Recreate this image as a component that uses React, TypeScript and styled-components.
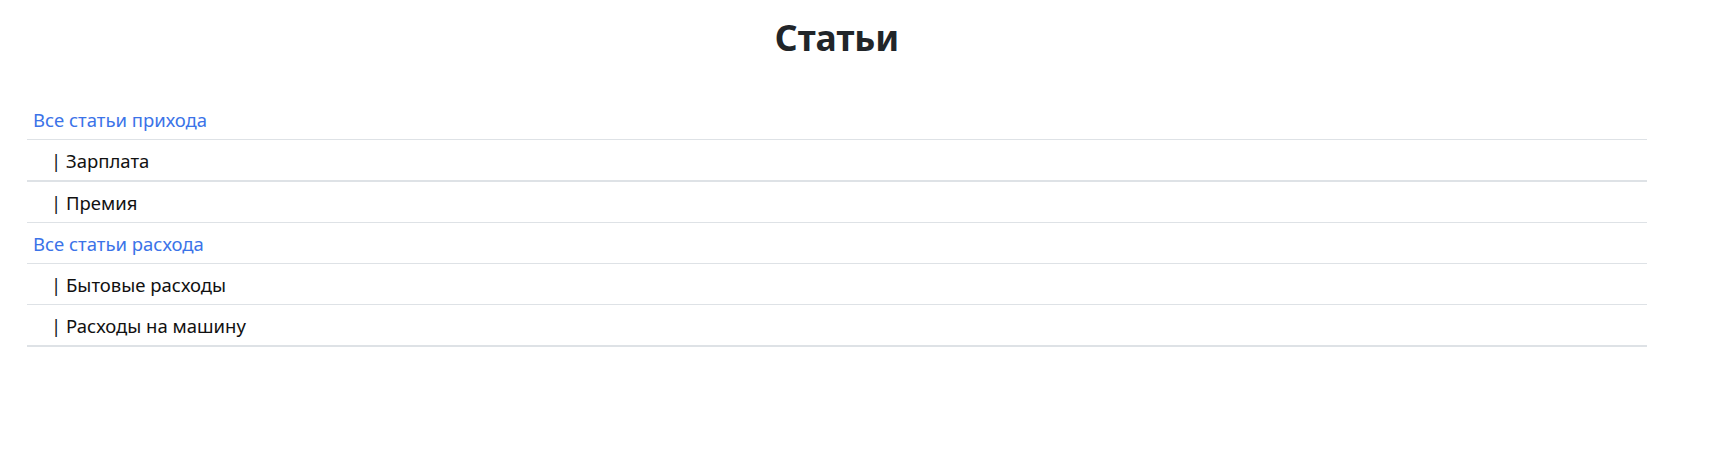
import React from "react";
import styled, { createGlobalStyle } from "styled-components";

const GlobalStyle = createGlobalStyle`
  html, body {
    margin: 0;
    padding: 0;
    background: #ffffff;
  }
  body {
    font-family: "Noto Sans", "Open Sans", Arial, sans-serif;
    font-size: 18.5px;
    line-height: 1.5;
    color: #212529;
  }
`;

const Page = styled.div`
  width: 1620px;
  margin-left: 27px;
  padding-top: 16px;
`;

const Title = styled.h3`
  margin: 0 0 40px;
  font-size: 35.5px;
  line-height: 43px;
  font-weight: 700;
  text-align: center;
  color: #212529;
`;

const List = styled.div`
  display: flex;
  flex-direction: column;
`;

const Row = styled.div<{ $thick?: boolean; $child?: boolean }>`
  padding: 9px 8px 7px ${(p) => (p.$child ? "24px" : "6px")};
  line-height: 24px;
  border-bottom: ${(p) => (p.$thick ? "2px" : "1px")} solid #dee2e6;
`;

const GroupLink = styled.a`
  color: #3b73e8;
  text-decoration: none;
  cursor: pointer;
`;

const Item = styled.span`
  color: #111111;
`;

type Entry = { label: string; child?: boolean; thick?: boolean };

const entries: Entry[] = [
  { label: "Все статьи прихода" },
  { label: "| Зарплата", child: true, thick: true },
  { label: "| Премия", child: true },
  { label: "Все статьи расхода" },
  { label: "| Бытовые расходы", child: true },
  { label: "| Расходы на машину", child: true, thick: true },
];

export default function App() {
  return (
    <>
      <GlobalStyle />
      <Page>
        <Title>Статьи</Title>
        <List>
          {entries.map((e) => (
            <Row key={e.label} $child={e.child} $thick={e.thick}>
              {e.child ? (
                <Item>{e.label}</Item>
              ) : (
                <GroupLink href="#">{e.label}</GroupLink>
              )}
            </Row>
          ))}
        </List>
      </Page>
    </>
  );
}
